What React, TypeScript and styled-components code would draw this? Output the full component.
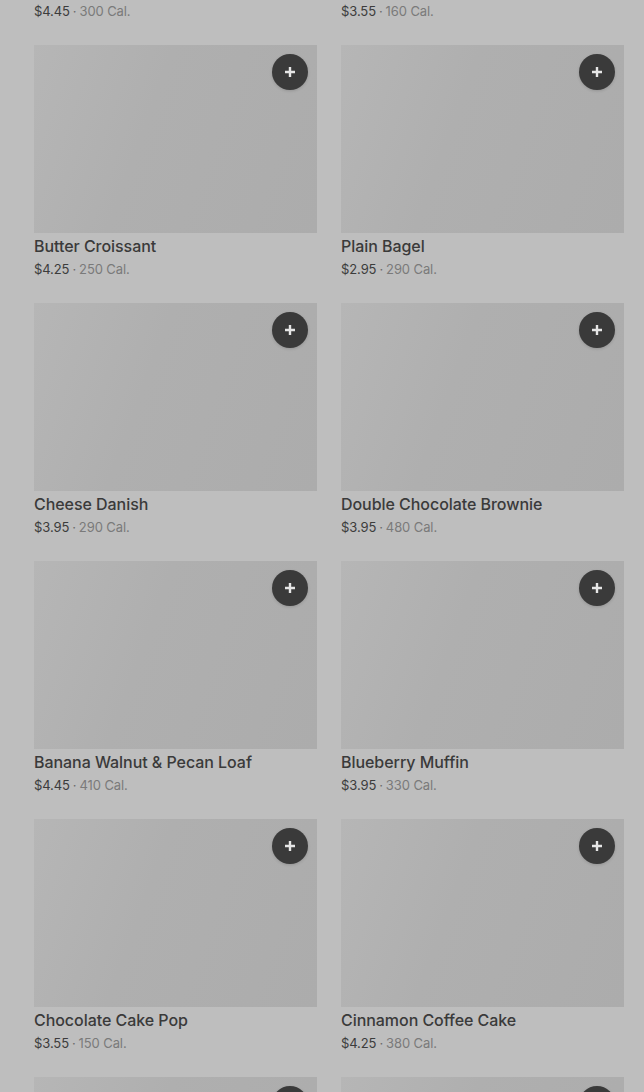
import React from 'react';
import styled, { createGlobalStyle } from 'styled-components';

const GlobalStyle = createGlobalStyle`
  html, body {
    margin: 0;
    padding: 0;
    background: #bebebe;
    overflow: hidden;
  }
  body {
    font-family: Inter, "Noto Sans", Arial, sans-serif;
    -webkit-font-smoothing: antialiased;
  }
`;

const Page = styled.div`
  width: 644px;
  height: 1092px;
  overflow: hidden;
  background: #bebebe;
`;

// the list is scrolled, so the first row sits partly above the top edge
const Grid = styled.div`
  display: grid;
  grid-template-columns: 283px 283px;
  column-gap: 24px;
  row-gap: 23px;
  padding: 0 20px 0 34px;
  margin-top: -213px;
`;

const Card = styled.div`
  display: flex;
  flex-direction: column;
`;

const Thumb = styled.div`
  position: relative;
  height: 188px;
  background: linear-gradient(110deg, #b6b6b6 0%, #afafaf 40%, #acacac 100%);
`;

const AddButton = styled.button`
  position: absolute;
  top: 9px;
  right: 9px;
  width: 36px;
  height: 36px;
  border-radius: 50%;
  border: none;
  padding: 0;
  background: #3a3a3a;
  display: flex;
  align-items: center;
  justify-content: center;
  box-shadow: 0 1px 3px rgba(0, 0, 0, 0.15);
`;

const Title = styled.div`
  margin-top: 1px;
  font-size: 16px;
  line-height: 24px;
  font-weight: 500;
  color: #3a3a3a;
  letter-spacing: -0.05px;
`;

const Meta = styled.div`
  font-size: 13px;
  line-height: 22px;
  color: #3c3c3c;
  letter-spacing: -0.1px;
`;

const Dot = styled.span`
  color: #6a6a6a;
  margin: 0 3px;
`;

const Cal = styled.span`
  color: #7a7a7a;
`;

const items = [
  { name: 'Glazed Doughnut', price: '$4.45', cal: 300 },
  { name: 'Petite Vanilla Scone', price: '$3.55', cal: 160 },
  { name: 'Butter Croissant', price: '$4.25', cal: 250 },
  { name: 'Plain Bagel', price: '$2.95', cal: 290 },
  { name: 'Cheese Danish', price: '$3.95', cal: 290 },
  { name: 'Double Chocolate Brownie', price: '$3.95', cal: 480 },
  { name: 'Banana Walnut & Pecan Loaf', price: '$4.45', cal: 410 },
  { name: 'Blueberry Muffin', price: '$3.95', cal: 330 },
  { name: 'Chocolate Cake Pop', price: '$3.55', cal: 150 },
  { name: 'Cinnamon Coffee Cake', price: '$4.25', cal: 380 },
  { name: 'Lemon Loaf', price: '$3.75', cal: 470 },
  { name: 'Everything Bagel', price: '$2.95', cal: 290 },
];

const PlusIcon = () => (
  <svg width="12" height="12" viewBox="0 0 12 12">
    <path d="M6 1v10M1 6h10" stroke="#e6e6e6" strokeWidth="2.4" />
  </svg>
);

export default function App() {
  return (
    <Page>
      <GlobalStyle />
      <Grid>
        {items.map((it) => (
          <Card key={it.name}>
            <Thumb>
              <AddButton aria-label={`Add ${it.name}`}>
                <PlusIcon />
              </AddButton>
            </Thumb>
            <Title>{it.name}</Title>
            <Meta>
              {it.price}
              <Dot>·</Dot>
              <Cal>{it.cal} Cal.</Cal>
            </Meta>
          </Card>
        ))}
      </Grid>
    </Page>
  );
}
